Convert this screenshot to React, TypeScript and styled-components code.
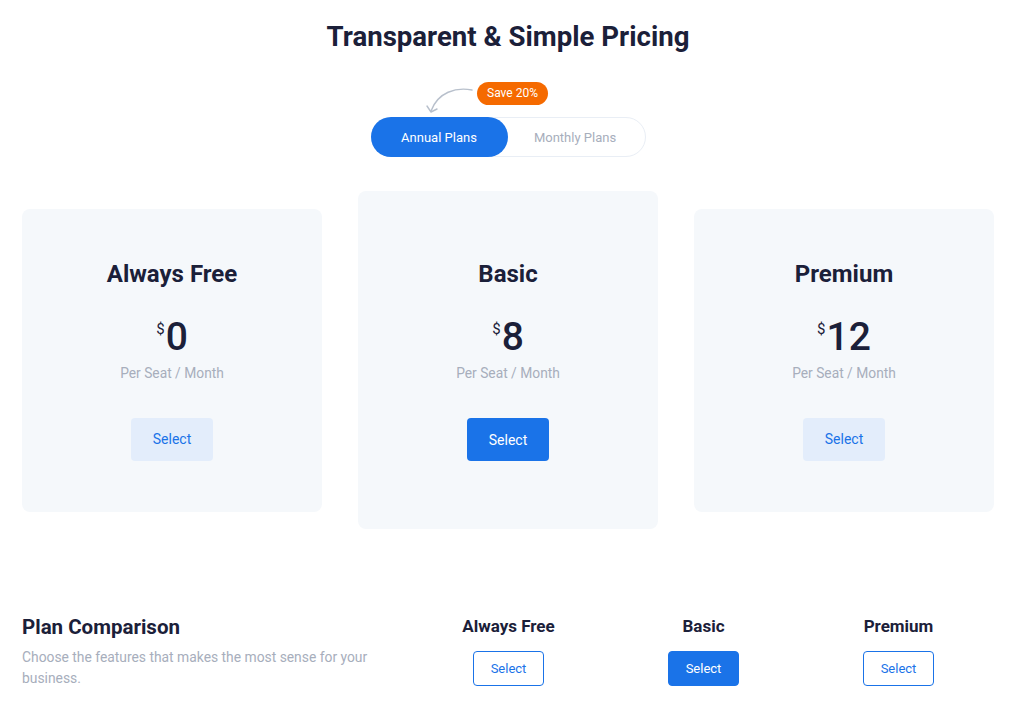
import React, { useState } from "react";
import styled, { createGlobalStyle } from "styled-components";

const GlobalStyle = createGlobalStyle`
  * { box-sizing: border-box; }
  body {
    margin: 0;
    background: #ffffff;
    font-family: Roboto, "Liberation Sans", Arial, sans-serif;
    color: #1b2039;
  }
`;

const Page = styled.div`
  width: 1024px;
  padding: 21px 30px 0 22px;
`;

const Title = styled.h1`
  margin: 0;
  text-align: center;
  font-size: 27.6px;
  line-height: 32px;
  font-weight: 700;
  color: #1b2039;
`;

const ToggleArea = styled.div`
  position: relative;
  display: flex;
  justify-content: center;
  margin-top: 64px;
`;

const Toggle = styled.div`
  display: flex;
  width: 275px;
  height: 40px;
  border: 1px solid #e9eef5;
  border-radius: 20px;
  background: #ffffff;
`;

const ToggleOption = styled.button<{ $active: boolean }>`
  width: 137px;
  height: 40px;
  margin: -1px 0 0 -1px;
  border: none;
  border-radius: 20px;
  font-family: inherit;
  font-size: 13px;
  cursor: pointer;
  background: ${({ $active }) => ($active ? "#1a73e8" : "transparent")};
  color: ${({ $active }) => ($active ? "#ffffff" : "#a7aebc")};
`;

const Badge = styled.span`
  position: absolute;
  left: 455px;
  top: -35px;
  height: 23px;
  padding: 0 10px;
  border-radius: 12px;
  background: #f56a00;
  color: #ffffff;
  font-size: 12px;
  line-height: 23px;
`;

const Arrow = styled.svg`
  position: absolute;
  left: 398px;
  top: -30px;
`;

const Cards = styled.div`
  display: flex;
  align-items: center;
  gap: 36px;
  margin-top: 34px;
`;

const Card = styled.div<{ $featured: boolean }>`
  flex: 0 0 300px;
  display: flex;
  flex-direction: column;
  align-items: center;
  padding: ${({ $featured }) => ($featured ? "68px 0 68px" : "50px 0 51px")};
  background: #f5f8fb;
  border-radius: 8px;
`;

const PlanName = styled.h2`
  margin: 0;
  font-size: 24px;
  line-height: 30px;
  font-weight: 700;
  color: #1b2039;
`;

const Price = styled.div`
  display: flex;
  align-items: flex-start;
  margin-top: 26px;
  color: #1b2039;
`;

const Currency = styled.span`
  font-size: 15px;
  line-height: 20px;
  margin-top: 4px;
  margin-right: 1px;
`;

const Amount = styled.span`
  font-size: 39px;
  line-height: 44px;
  font-weight: 500;
`;

const Period = styled.div`
  margin-top: 4px;
  font-size: 13.8px;
  line-height: 20px;
  color: #a7aebc;
`;

const CardButton = styled.button<{ $primary: boolean }>`
  margin-top: 35px;
  width: 82px;
  height: 43px;
  border: none;
  border-radius: 4px;
  font-family: inherit;
  font-size: 14px;
  cursor: pointer;
  background: ${({ $primary }) => ($primary ? "#1a73e8" : "#e3edfb")};
  color: ${({ $primary }) => ($primary ? "#ffffff" : "#1a73e8")};
`;

const Comparison = styled.div`
  display: grid;
  grid-template-columns: 1fr 195px 195px 195px;
  margin: 83px -2px 0 0;
`;

const Intro = styled.div`
  padding-top: 2px;
`;

const IntroTitle = styled.h3`
  margin: 0;
  font-size: 20.5px;
  line-height: 26px;
  font-weight: 700;
  color: #1b2039;
`;

const IntroText = styled.p`
  margin: 7px 0 0;
  width: 360px;
  font-size: 13.85px;
  line-height: 21px;
  color: #a7aebc;
`;

const PlanColumn = styled.div`
  display: flex;
  flex-direction: column;
  align-items: center;
  padding-top: 3px;
`;

const ColumnName = styled.div`
  font-size: 17px;
  line-height: 22px;
  font-weight: 700;
  color: #1b2039;
`;

const OutlineButton = styled.button<{ $primary: boolean }>`
  margin-top: 14px;
  width: 71px;
  height: 35px;
  border-radius: 4px;
  border: 1px solid #1a73e8;
  font-family: inherit;
  font-size: 13px;
  cursor: pointer;
  background: ${({ $primary }) => ($primary ? "#1a73e8" : "#ffffff")};
  color: ${({ $primary }) => ($primary ? "#ffffff" : "#1a73e8")};
`;

const plans = [
  { name: "Always Free", price: "0", featured: false },
  { name: "Basic", price: "8", featured: true },
  { name: "Premium", price: "12", featured: false },
];

const App: React.FC = () => {
  const [annual, setAnnual] = useState(true);

  return (
    <>
      <GlobalStyle />
      <Page>
        <Title>Transparent &amp; Simple Pricing</Title>

        <ToggleArea>
          <Arrow width="56" height="30" viewBox="0 0 56 30" fill="none">
            <path
              d="M52 3 C 36 0, 18 5, 11 24"
              stroke="#b8c0cc"
              strokeWidth="1.4"
              strokeLinecap="round"
            />
            <path
              d="M7 19 L11 25 L17 22"
              stroke="#b8c0cc"
              strokeWidth="1.4"
              strokeLinecap="round"
              strokeLinejoin="round"
            />
          </Arrow>
          <Badge>Save 20%</Badge>
          <Toggle>
            <ToggleOption $active={annual} onClick={() => setAnnual(true)}>
              Annual Plans
            </ToggleOption>
            <ToggleOption $active={!annual} onClick={() => setAnnual(false)}>
              Monthly Plans
            </ToggleOption>
          </Toggle>
        </ToggleArea>

        <Cards>
          {plans.map((plan) => (
            <Card key={plan.name} $featured={plan.featured}>
              <PlanName>{plan.name}</PlanName>
              <Price>
                <Currency>$</Currency>
                <Amount>{plan.price}</Amount>
              </Price>
              <Period>Per Seat / Month</Period>
              <CardButton $primary={plan.featured}>Select</CardButton>
            </Card>
          ))}
        </Cards>

        <Comparison>
          <Intro>
            <IntroTitle>Plan Comparison</IntroTitle>
            <IntroText>
              Choose the features that makes the most sense for your business.
            </IntroText>
          </Intro>
          {plans.map((plan) => (
            <PlanColumn key={plan.name}>
              <ColumnName>{plan.name}</ColumnName>
              <OutlineButton $primary={plan.featured}>Select</OutlineButton>
            </PlanColumn>
          ))}
        </Comparison>
      </Page>
    </>
  );
};

export default App;
